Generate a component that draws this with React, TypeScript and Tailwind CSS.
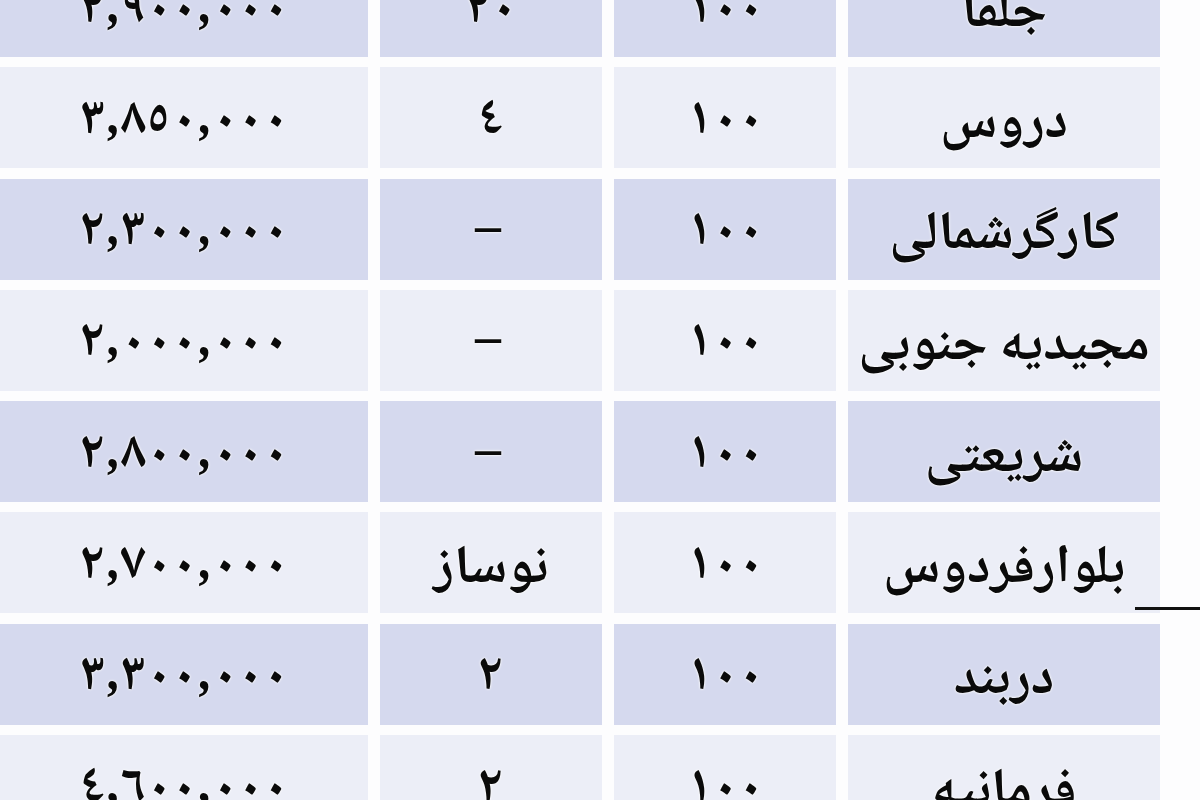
import React from "react";

const rows: { name: string; area: string; age: string; price: string }[] = [
  { name: "جلفا", area: "١٠٠", age: "٢٠", price: "٢,٩٠٠,٠٠٠" },
  { name: "دروس", area: "١٠٠", age: "٤", price: "٣,٨٥٠,٠٠٠" },
  { name: "کارگرشمالی", area: "١٠٠", age: "–", price: "٢,٣٠٠,٠٠٠" },
  { name: "مجیدیه جنوبی", area: "١٠٠", age: "–", price: "٢,٠٠٠,٠٠٠" },
  { name: "شریعتی", area: "١٠٠", age: "–", price: "٢,٨٠٠,٠٠٠" },
  { name: "بلوارفردوس", area: "١٠٠", age: "نوساز", price: "٢,٧٠٠,٠٠٠" },
  { name: "دربند", area: "١٠٠", age: "٢", price: "٣,٣٠٠,٠٠٠" },
  { name: "فرمانیه", area: "١٠٠", age: "٢", price: "٤,٦٠٠,٠٠٠" },
];

const font = "font-['Noto_Naskh_Arabic','Noto_Sans_Arabic','DejaVu_Sans',sans-serif]";

function Cell({ children, dark, num }: { children: React.ReactNode; dark: boolean; num?: boolean }) {
  return (
    <div
      dir="rtl"
      className={`flex items-center justify-center whitespace-nowrap overflow-visible ${
        dark ? "bg-[#d5d9ee]" : "bg-[#eceef7]"
      }`}
    >
      <span
        className={`${font} font-bold text-[#0a0a0a] [text-shadow:0_0_3px_#fff,0_0_2px_#fff] ${
          num ? "text-[52px] tracking-[6px] pt-[8px]" : "text-[54px] pt-[14px]"
        } leading-none`}
      >
        {children}
      </span>
    </div>
  );
}

export default function App() {
  return (
    <div className="relative w-[1200px] h-[800px] overflow-hidden bg-[#fdfdfe]">
      <div className="mt-[-44px] grid grid-cols-[368px_222px_222px_312px] gap-x-[12px] gap-y-[10.3px] auto-rows-[101px]">
        {rows.map((r, i) => {
          const dark = i % 2 === 0;
          return (
            <React.Fragment key={i}>
              <Cell dark={dark} num>
                {r.price}
              </Cell>
              <Cell dark={dark} num={r.age !== "نوساز"}>
                {r.age}
              </Cell>
              <Cell dark={dark} num>
                {r.area}
              </Cell>
              <Cell dark={dark}>{r.name}</Cell>
            </React.Fragment>
          );
        })}
      </div>
      <div className="absolute left-[1135px] top-[607px] w-[65px] h-[3px] bg-[#111]" />
    </div>
  );
}
